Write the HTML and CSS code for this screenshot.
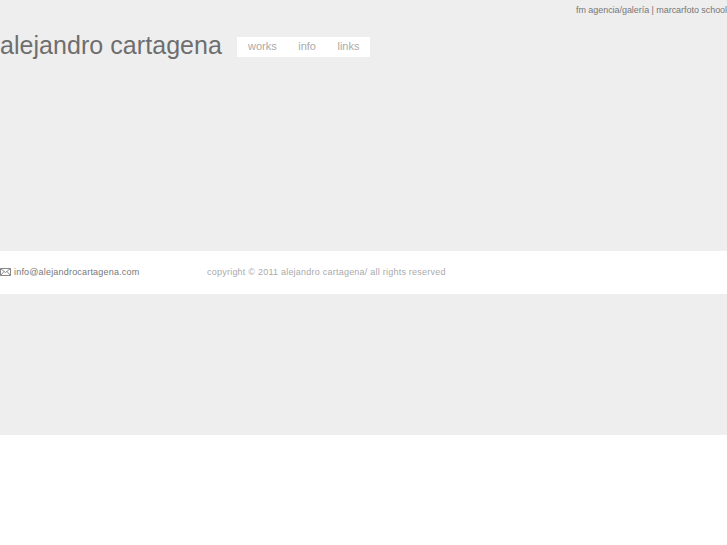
FILE: index.html
```html
<!DOCTYPE html>
<html>
<head>
  <title>alejandro cartagena</title>
  <link rel="stylesheet" href="styles.css">
</head>
<body>
  <div class="top">
    <div class="toplinks">fm agencia/galería | marcarfoto school</div>
    <div class="head">
      <h1 class="name">alejandro cartagena</h1>
      <ul class="menu">
        <li>works</li>
        <li>info</li>
        <li>links</li>
      </ul>
    </div>
  </div>
  <div class="footer">
    <div class="mail">
      <svg class="mail-icon" width="11" height="8" viewBox="0 0 11 8"><path d="M.5.5h10v7H.5zM.5.5l5 4 5-4M.5 7.500l3.500-4M10.500 7.500l-3.500-4" fill="none" stroke="#888" stroke-width="1"/></svg>
      <span>info@alejandrocartagena.com</span>
    </div>
    <div class="copy">copyright © 2011 alejandro cartagena/ all rights reserved</div>
  </div>
  <div class="bottom"></div>
</body>
</html>
```

FILE: styles.css
```css
body {
  margin: 0;
  background-color: #fff;
  font-family: "Liberation Sans", Arial, sans-serif;
  color: #666;
}

.top {
  height: 251px;
  background-color: #eee;
  overflow: hidden;
}

.toplinks {
  padding-top: 4px;
  text-align: right;
  font-size: 9px;
  line-height: 12px;
  letter-spacing: -0.05px;
  color: #777;
}

.head {
  display: flex;
  align-items: flex-start;
  margin-top: 14px;
}

.name {
  margin: 0;
  font-size: 25px;
  font-weight: normal;
  line-height: 30px;
  letter-spacing: 0.05px;
  color: #6e6e6e;
}

.menu {
  display: flex;
  gap: 21.5px;
  margin: 7px 0 0 15px;
  padding: 0 11px;
  height: 20px;
  list-style: none;
  background-color: #fff;
  font-size: 11px;
  line-height: 19px;
  color: #aaa;
}

.footer {
  display: flex;
  align-items: center;
  height: 43px;
  padding-bottom: 1px;
  box-sizing: border-box;
  font-size: 9px;
}

.mail {
  display: flex;
  align-items: center;
  gap: 3px;
  width: 207px;
  letter-spacing: 0.19px;
  color: #777;
}

.mail-icon {
  margin-top: -1px;
}

.copy {
  letter-spacing: 0.23px;
  color: #aaa;
}

.bottom {
  height: 141px;
  background-color: #eee;
}
```
